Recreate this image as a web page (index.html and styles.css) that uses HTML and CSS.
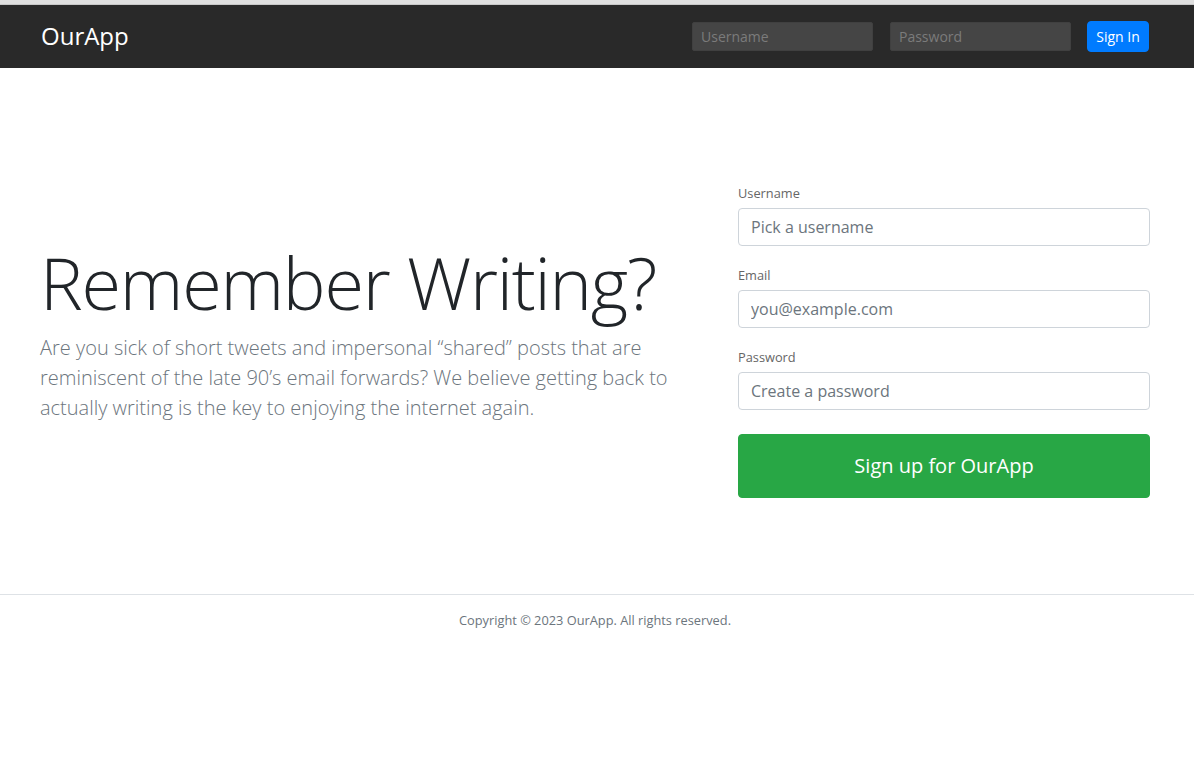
FILE: index.html
```html
<!DOCTYPE html>
<html lang="en">
<head>
<meta charset="utf-8">
<title>OurApp</title>
<link rel="stylesheet" href="styles.css">
</head>
<body>
<div class="topstrip"></div>
<header class="header">
  <div class="container header-inner">
    <h4 class="brand">OurApp</h4>
    <form class="login">
      <input class="hinput" type="text" placeholder="Username">
      <input class="hinput" type="password" placeholder="Password">
      <button class="btn-signin" type="button">Sign In</button>
    </form>
  </div>
</header>
<main class="container main">
  <div class="intro">
    <h1 class="display">Remember Writing?</h1>
    <p class="lead">Are you sick of short tweets and impersonal “shared” posts that are reminiscent of the late 90’s email forwards? We believe getting back to actually writing is the key to enjoying the internet again.</p>
  </div>
  <form class="signup">
    <div class="group">
      <label class="label">Username</label>
      <input class="input" type="text" placeholder="Pick a username">
    </div>
    <div class="group">
      <label class="label">Email</label>
      <input class="input" type="text" placeholder="you@example.com">
    </div>
    <div class="group">
      <label class="label">Password</label>
      <input class="input" type="password" placeholder="Create a password">
    </div>
    <button class="btn-signup" type="button">Sign up for OurApp</button>
  </form>
</main>
<footer class="footer">
  <p class="copy">Copyright © 2023 OurApp. All rights reserved.</p>
</footer>
</body>
</html>
```
FILE: styles.css
```css
* { box-sizing: border-box; }
html, body { margin: 0; padding: 0; background: #fff; }
body {
  font-family: "Open Sans", "Liberation Sans", sans-serif;
  color: #212529;
  font-size: 16px;
  line-height: 1.5;
}
.topstrip { height: 5px; background: #dfdfdf; border-bottom: 1px solid #c8c8c8; }
.container {
  width: 1110px;
  margin-left: calc(50% - 557px);
}
.header { background: #292929; height: 63px; }
.header-inner {
  height: 63px;
  display: flex;
  align-items: center;
  justify-content: space-between;
}
.brand {
  margin: 0;
  font-size: 24px;
  font-weight: 400;
  color: #fff;
  line-height: 1.2;
  padding-left: 1px;
}
.login { display: flex; align-items: center; gap: 16px; padding-right: 1px; }
.hinput {
  width: 181px;
  height: 29px;
  background: #454545;
  border: 1px solid #404040;
  border-radius: 2px;
  padding: 0 8px;
  font-family: inherit;
  font-size: 14px;
  color: #ddd;
}
.hinput + .hinput { margin-left: 1px; }
.hinput::placeholder { color: #7b7b7b; }
.btn-signin {
  height: 31px;
  width: 62px;
  background: #007bff;
  border: 1px solid #007bff;
  border-radius: 4px;
  color: #fff;
  font-family: inherit;
  font-size: 14px;
  padding: 0;
}
.main {
  display: flex;
  align-items: center;
  justify-content: space-between;
  padding: 112px 0 96px;
}
.intro { width: 650px; }
.display {
  margin: 0 0 8px;
  font-size: 72px;
  font-weight: 300;
  line-height: 1.2;
  color: #212529;
  letter-spacing: -1.25px;
}
.lead {
  margin: 0 0 16px;
  font-size: 20px;
  font-weight: 300;
  line-height: 30px;
  color: #6c757d;
}
.signup { width: 412px; }
.group { margin-bottom: 16px; }
.label {
  display: block;
  font-size: 12.8px;
  line-height: 20px;
  padding-top: 3px;
  margin-bottom: 5px;
  color: #666;
}
.input {
  display: block;
  width: 100%;
  height: 38px;
  border: 1px solid #ced4da;
  border-radius: 4px;
  padding: 6px 12px;
  font-family: inherit;
  font-size: 16px;
  color: #495057;
}
.input::placeholder { color: #6c757d; }
.btn-signup {
  display: block;
  width: 100%;
  height: 64px;
  margin-top: 24px;
  background: #28a745;
  border: 1px solid #28a745;
  border-radius: 4px;
  color: #fff;
  font-family: inherit;
  font-size: 20px;
  line-height: 30px;
}
.footer {
  border-top: 1px solid #dee2e6;
  padding: 15px 4px 16px 0;
  text-align: center;
}
.copy {
  margin: 0;
  font-size: 12.8px;
  line-height: 20px;
  color: #6c757d;
}
```
